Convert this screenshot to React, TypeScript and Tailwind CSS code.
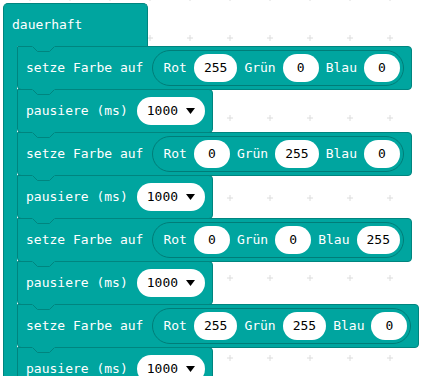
import React from "react";

const ROWS = [
  [255, 0, 0],
  [0, 255, 0],
  [0, 0, 255],
  [255, 255, 0],
];

function Notch() {
  return (
    <svg className="absolute -top-px left-[14px]" width="24" height="8" viewBox="0 0 24 8">
      <rect x="0" y="0" width="23" height="1" fill="#00a59f" />
      <path d="M0.5 0.5 L5.5 5.5 L17.5 5.5 L22.5 0.5" fill="#00a59f" stroke="#00857f" strokeWidth="1" />
    </svg>
  );
}

function Pill({ children }: { children: React.ReactNode }) {
  return (
    <div className="h-[28px] min-w-[36px] px-[10px] rounded-full bg-white flex items-center justify-center text-black">
      {children}
    </div>
  );
}

function SetColor({ rgb }: { rgb: number[] }) {
  const labels = ["Rot", "Grün", "Blau"];
  return (
    <div className="relative -mb-px h-[44px] self-start flex items-center gap-[9px] pl-[8px] pr-[7px] bg-[#00a59f] border border-[#00857f] rounded-[4px] rounded-tl-none">
      <Notch />
      <span>setze Farbe auf</span>
      <div className="h-[36px] flex items-center gap-[7px] pl-[10px] pr-[3px] rounded-full border border-[#007d78]">
        {rgb.map((v, i) => (
          <React.Fragment key={i}>
            <span>{labels[i]}</span>
            <Pill>{v}</Pill>
          </React.Fragment>
        ))}
      </div>
    </div>
  );
}

function Pause() {
  return (
    <div className="relative -mb-px h-[44px] w-[196px] flex items-center gap-[9px] pl-[8px] bg-[#00a59f] border border-[#00857f] rounded-[4px] rounded-tl-none">
      <Notch />
      <span>pausiere (ms)</span>
      <div className="h-[28px] px-[10px] rounded-full bg-white flex items-center gap-[8px] text-black">
        <span>1000</span>
        <svg width="9" height="6" viewBox="0 0 9 6">
          <path d="M0 0 L9 0 L4.5 6 Z" fill="#000" />
        </svg>
      </div>
    </div>
  );
}

export default function App() {
  return (
    <div className="relative w-[427px] h-[376px] overflow-hidden bg-white text-white text-[13px] font-['DejaVu_Sans_Mono',monospace]">
      {/* canvas grid */}
      <svg className="absolute inset-0" width="427" height="376">
        <defs>
          <pattern id="grid" x="-10" y="-2" width="40" height="40" patternUnits="userSpaceOnUse">
            <path d="M37 40 H43 M40 37 V43 M-3 0 H3 M0 -3 V3 M37 0 H43 M40 -3 V3 M-3 40 H3 M0 37 V43" stroke="#dcdcdc" strokeWidth="1" />
          </pattern>
        </defs>
        <rect width="427" height="376" fill="url(#grid)" />
      </svg>

      <div className="relative flex flex-col pl-[3px] pt-[3px]">
        <div className="h-[43px] w-[145px] flex items-center pl-[8px] bg-[#00a59f] border border-b-0 border-[#00857f] rounded-t-[5px]">
          dauerhaft
        </div>
        <div className="flex">
          <div className="w-[14px] h-[400px] bg-[#00a59f] border-l border-[#00857f]" />
          <div className="flex flex-col items-start">
            {ROWS.map((rgb, i) => (
              <React.Fragment key={i}>
                <SetColor rgb={rgb} />
                <Pause />
              </React.Fragment>
            ))}
          </div>
        </div>
      </div>
    </div>
  );
}
